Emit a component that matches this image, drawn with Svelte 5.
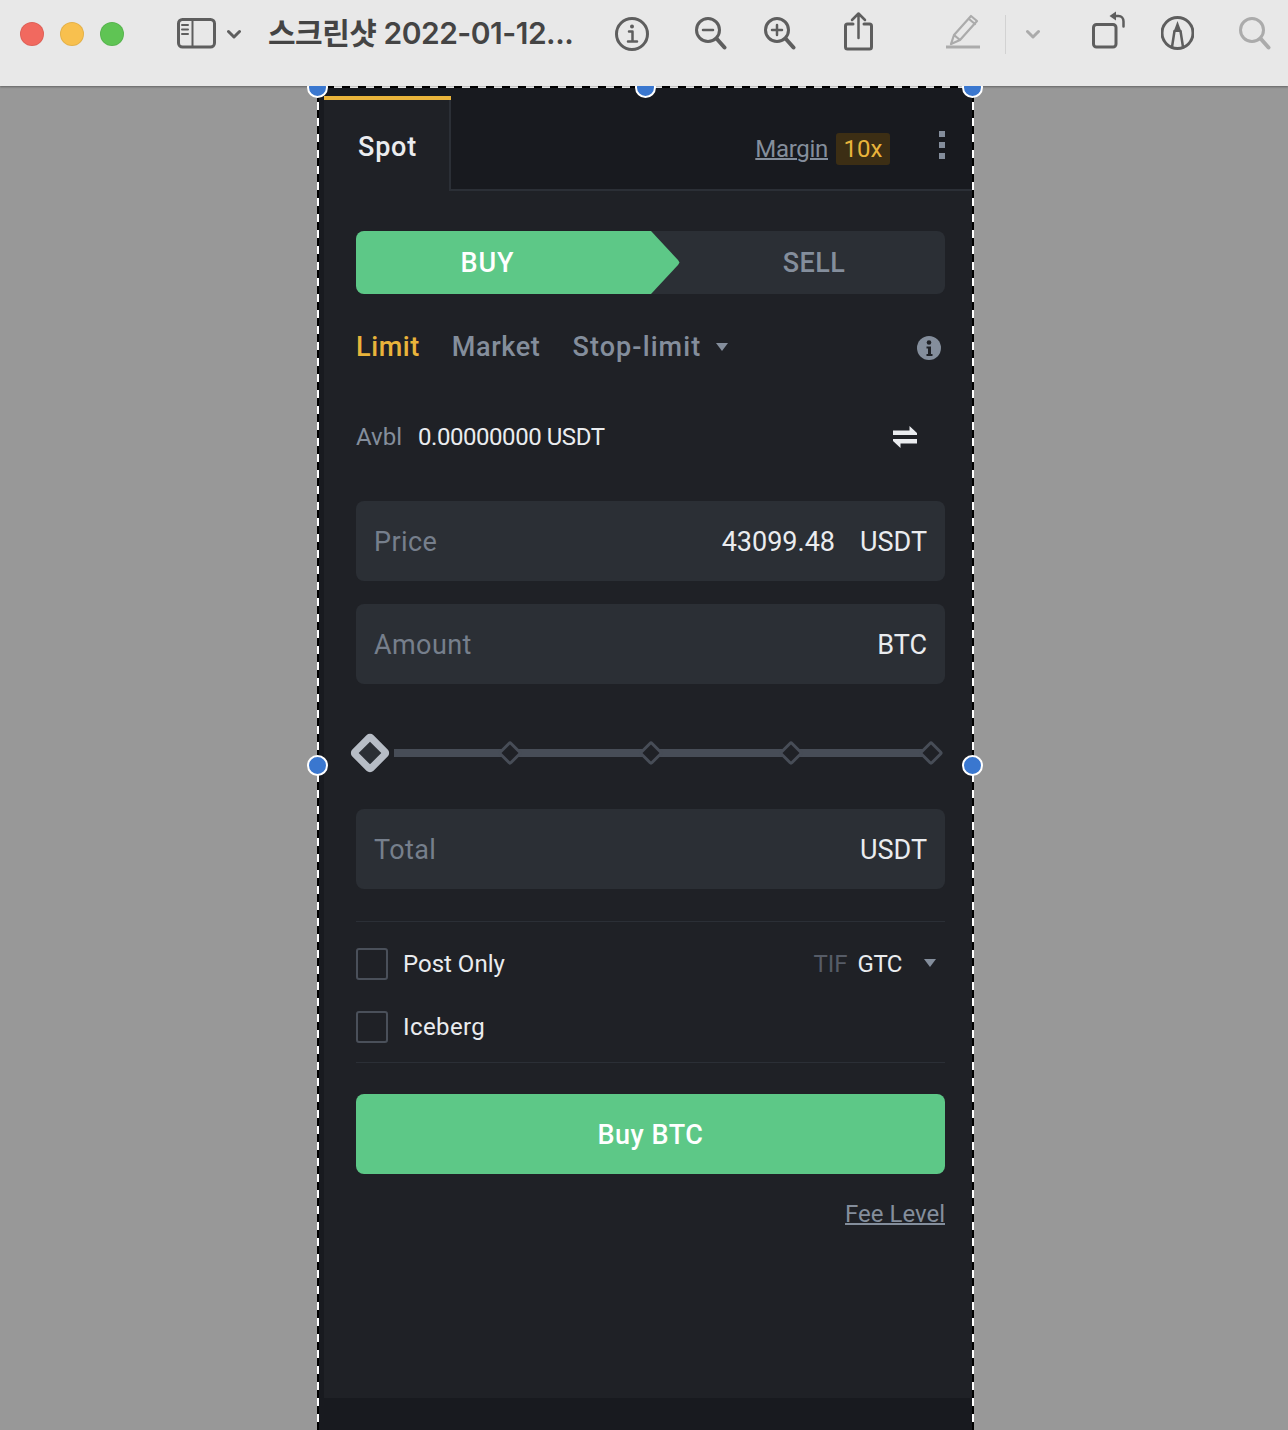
<script>
	const stops = [1, 2, 3, 4];
</script>

<header class="toolbar">
	<span class="light red"></span>
	<span class="light yellow"></span>
	<span class="light green"></span>

	<svg class="ic ml-sidebar" width="39" height="48" viewBox="0 0 39 48">
		<rect x="1.5" y="9.5" width="36" height="27.5" rx="4" />
		<path d="M15.5 9.5V37M5 15h6M5 19.5h6M5 24h6" stroke-width="2" />
	</svg>
	<svg class="ic ml-chev" width="14" height="48" viewBox="0 0 14 48">
		<path d="M1.5 21.5l5.5 5.5 5.5-5.5" />
	</svg>
	<div class="title">스크린샷 2022-01-12...</div>
	<svg class="ic ml-info" width="34" height="48" viewBox="0 0 34 48">
		<circle cx="17" cy="24" r="15.5" />
		<path d="M14 21.5h3.5V31M13 31.5h9" stroke-width="2.5" />
		<circle class="dot" cx="17" cy="16.5" r="2" />
	</svg>
	<svg class="ic ml-zoomout" width="32" height="48" viewBox="0 0 32 48">
		<circle cx="13" cy="20" r="11.5" />
		<path d="M8 20h10" stroke-width="2.5" />
		<path d="M21.5 28.5l8 9" stroke-width="4" />
	</svg>
	<svg class="ic ml-zoomin" width="32" height="48" viewBox="0 0 32 48">
		<circle cx="13" cy="20" r="11.5" />
		<path d="M8 20h10M13 15v10" stroke-width="2.5" />
		<path d="M21.5 28.5l8 9" stroke-width="4" />
	</svg>
	<svg class="ic ml-share" width="29" height="48" viewBox="0 0 29 48">
		<path d="M9 14H3.5a2 2 0 0 0-2 2v21a2 2 0 0 0 2 2h22a2 2 0 0 0 2-2V16a2 2 0 0 0-2-2H20" />
		<path d="M14.5 28V4M8 10l6.5-6.5L21 10" stroke-width="2.5" />
	</svg>
	<svg class="ic muted ml-pen" width="34" height="48" viewBox="0 0 34 48">
		<path d="M5 34l3-9 17-19 6 5-17 19zM8 25l6 5M23 9l6 5" stroke-width="2.2" />
		<path d="M0 37h34" stroke-width="2.8" />
	</svg>
	<div class="sep"></div>
	<svg class="ic muted ml-chev2" width="14" height="48" viewBox="0 0 14 48">
		<path d="M1.5 21.5l5.5 5.5 5.5-5.5" />
	</svg>
	<svg class="ic ml-rotate" width="33" height="48" viewBox="0 0 33 48">
		<rect x="1.5" y="14.5" width="22.5" height="22.5" rx="3" />
		<path d="M31.500 16.500v-5c0-3-2-5.500-5-5.500h-4" stroke-width="2.500" />
		<path class="dot" d="M17.500 6l6.500-4.500v9z" />
	</svg>
	<svg class="ic ml-markup" width="33" height="48" viewBox="0 0 33 48">
		<circle cx="16.500" cy="23" r="15.500" />
		<path d="M13.500 21l-2.500 16M19.500 21l2.500 16" stroke-width="2.500" />
		<path class="dot" d="M16.500 11l4 11h-8z" />
	</svg>
	<svg class="ic muted ml-search" width="32" height="48" viewBox="0 0 32 48">
		<circle cx="13" cy="20" r="11.500" />
		<path d="M21.500 28.500l8 9" stroke-width="4" />
	</svg>
</header>

<main class="stage">
	<section class="selection">
		<span class="dash-top"></span>
		<span class="handle h-tl"></span>
		<span class="handle h-tm"></span>
		<span class="handle h-tr"></span>
		<span class="handle h-ml"></span>
		<span class="handle h-mr"></span>

		<div class="panel">
			<div class="tabs">
				<div class="tab-spot">Spot</div>
				<div class="tab-rest">
					<a class="margin-link" href="#margin">Margin</a>
					<span class="badge">10x</span>
					<span class="dots"><i></i><i></i><i></i></span>
				</div>
			</div>

			<div class="body">
				<div class="side">
					<div class="buy">BUY</div>
					<div class="sell">SELL</div>
				</div>

				<div class="types">
					<span class="active">Limit</span>
					<span>Market</span>
					<span class="stop">Stop-limit</span>
					<span class="caret"></span>
					<svg class="info" width="24" height="24" viewBox="0 0 24 24">
						<circle cx="12" cy="12" r="12" fill="#848e9c" />
						<circle cx="12" cy="6.500" r="2.300" fill="#1f2126" />
						<path d="M9.500 10.500h4.500v7.500h1.500v2h-6v-2h1.500v-5.500h-1.500z" fill="#1f2126" />
					</svg>
				</div>

				<div class="avbl">
					<span class="avbl-label">Avbl</span>
					<span class="avbl-value">0.00000000 USDT</span>
					<svg class="swap" width="26" height="24" viewBox="0 0 26 24">
						<path d="M1 5.500h16.500V1L25 8v2H1zM25 14v4.500H8.500V23L1 16v-2z" fill="#eaecef" />
					</svg>
				</div>

				<div class="field">
					<span class="label">Price</span>
					<span class="value">43099.48</span>
					<span class="unit">USDT</span>
				</div>
				<div class="field second">
					<span class="label">Amount</span>
					<span class="unit">BTC</span>
				</div>

				<div class="slider">
					<span class="node thumb"></span>
					{#each stops as s (s)}
						<span class="node"></span>
					{/each}
				</div>

				<div class="field">
					<span class="label">Total</span>
					<span class="unit">USDT</span>
				</div>

				<div class="options">
					<div class="opt">
						<span class="check"></span>
						<span class="opt-name">Post Only</span>
						<span class="tif">TIF</span>
						<span class="gtc">GTC</span>
						<span class="caret light-caret"></span>
					</div>
					<div class="opt">
						<span class="check"></span>
						<span class="opt-name wide">Iceberg</span>
					</div>
				</div>

				<button class="submit">Buy BTC</button>
				<div class="fee"><a href="#fee">Fee Level</a></div>
			</div>
		</div>
	</section>
</main>

<style>
	:global(body) {
		background: #989898;
		font-family: Roboto, "Noto Sans CJK KR", sans-serif;
		overflow: hidden;
	}

	.toolbar {
		position: relative;
		z-index: 3;
		display: flex;
		align-items: center;
		box-sizing: border-box;
		height: 86px;
		padding: 0 0 18px 20px;
		background: #e8e8e8;
		box-shadow: 0 1px 2px rgba(0, 0, 0, 0.35);
	}

	.light {
		width: 24px;
		height: 24px;
		border-radius: 50%;
		margin-right: 16px;
		box-sizing: border-box;
		border: 1px solid rgba(0, 0, 0, 0.08);
	}
	.red { background: #f1695f; }
	.yellow { background: #f8c04e; }
	.green { background: #5fc454; margin-right: 0; }

	.ic {
		flex: none;
		fill: none;
		stroke: #5e5e5e;
		stroke-width: 3;
		stroke-linecap: round;
		stroke-linejoin: round;
	}
	.ic.muted { stroke: #ababab; }
	.ic .dot { fill: #5e5e5e; stroke: none; }

	.ml-sidebar { margin-left: 53px; }
	.ml-chev { margin-left: 11px; }
	.ml-info { margin-left: 40px; }
	.ml-zoomout { margin-left: 46px; }
	.ml-zoomin { margin-left: 37px; }
	.ml-share { margin-left: 48px; }
	.ml-pen { margin-left: 73px; }
	.ml-chev2 { margin-left: 20px; }
	.ml-rotate { margin-left: 52px; }
	.ml-markup { margin-left: 36px; }
	.ml-search { margin-left: 45px; }

	.title {
		flex: none;
		width: 307px;
		margin-left: 27px;
		margin-bottom: 6px;
		font-family: Inter, "Noto Sans CJK KR", sans-serif;
		font-size: 30px;
		font-weight: 600;
		letter-spacing: -0.5px;
		color: #444;
		white-space: nowrap;
	}

	.sep {
		flex: none;
		width: 1px;
		height: 39px;
		margin-left: 25px;
		background: #d2d2d2;
	}

	.stage {
		height: 1344px;
		padding-left: 318px;
		overflow: hidden;
	}

	.selection {
		position: relative;
		box-sizing: border-box;
		width: 655px;
		height: 1344px;
		background: #181a1f;
		padding-left: 6px;
	}
	.selection::before,
	.selection::after {
		content: "";
		position: absolute;
		top: 0;
		bottom: 0;
		width: 2px;
		z-index: 2;
		background: repeating-linear-gradient(#fff 0 8px, #000 8px 16px);
	}
	.selection::before { left: -1px; }
	.selection::after { right: -1px; }

	.dash-top {
		position: absolute;
		left: 0;
		right: 0;
		top: 0;
		height: 2px;
		z-index: 2;
		background: repeating-linear-gradient(90deg, #fff 0 8px, #000 8px 16px);
	}

	.handle {
		position: absolute;
		z-index: 3;
		box-sizing: border-box;
		width: 21px;
		height: 21px;
		margin: -10.500px 0 0 -10.500px;
		border-radius: 50%;
		background: #3a77cf;
		border: 2px solid #fff;
	}
	.h-tl { left: -0.500px; top: 1px; }
	.h-tm { left: 327px; top: 1px; }
	.h-tr { left: 654.500px; top: 1px; }
	.h-ml { left: -0.500px; top: 679px; }
	.h-mr { left: 654.500px; top: 679px; }

	.panel {
		background: #1f2126;
		height: 1312px;
		color: #eaecef;
	}

	.tabs {
		display: flex;
		height: 105px;
		background: #181a1f;
	}
	.tab-spot {
		box-sizing: border-box;
		width: 127px;
		margin-top: 14px;
		padding: 18px 0 0 34px;
		background: #1f2126;
		border-right: 2px solid #2b2f36;
		font-size: 27px;
		font-weight: 500;
		letter-spacing: 0.8px;
		line-height: 58px;
		position: relative;
	}
	.tab-spot::before {
		content: "";
		position: absolute;
		left: 0;
		right: -2px;
		top: -4px;
		height: 4px;
		background: #e9b43b;
	}
	.tab-rest {
		flex: 1;
		display: flex;
		align-items: center;
		justify-content: flex-end;
		box-sizing: border-box;
		padding: 22px 28px 0 0;
		background: #181a1f;
		border-bottom: 2px solid #2b2f36;
	}
	.margin-link {
		color: #848e9c;
		font-size: 24px;
		letter-spacing: -0.3px;
		text-decoration-thickness: 2px;
	}
	.badge {
		margin-left: 8px;
		width: 54px;
		text-align: center;
		height: 32px;
		line-height: 32px;
		border-radius: 3px;
		background: #3c2e14;
		color: #e9b43b;
		font-size: 24px;
	}
	.dots {
		display: flex;
		flex-direction: column;
		gap: 5px;
		margin-left: 49px;
		margin-bottom: 8px;
	}
	.dots i {
		display: block;
		width: 6px;
		height: 6px;
		background: #848e9c;
	}

	.body {
		padding: 40px 28px 0 32px;
	}

	.side {
		display: flex;
		height: 63px;
		border-radius: 8px;
		background: #2b2f35;
		overflow: hidden;
		font-size: 27px;
		font-weight: 500;
		line-height: 65px;
		text-align: center;
	}
	.buy {
		width: 324px;
		padding-right: 61px;
		box-sizing: border-box;
		background: #5dc887;
		color: #fff;
		letter-spacing: 1px;
		clip-path: polygon(0 0, 295px 0, 322px 29px, 323.500px 31.500px, 322px 34px, 295px 63px, 0 63px);
	}
	.sell {
		flex: 1;
		color: #848e9c;
		padding-left: 3px;
		letter-spacing: 0.4px;
	}

	.types {
		display: flex;
		align-items: center;
		height: 48px;
		margin-top: 29px;
		color: #848e9c;
		font-size: 27px;
		font-weight: 500;
		letter-spacing: 0.6px;
	}
	.types span { margin-right: 32px; }
	.types .active { color: #e9b43b; }
	.types .stop {
		margin-right: 15px;
		letter-spacing: 1.1px;
	}
	.types .caret { margin-right: 0; }

	.caret {
		width: 0;
		height: 0;
		border-left: 6px solid transparent;
		border-right: 6px solid transparent;
		border-top: 8px solid #848e9c;
	}
	.info {
		margin-left: auto;
		margin-right: 4px;
		transform: translateY(1px);
	}

	.avbl {
		display: flex;
		align-items: center;
		margin-top: 42px;
		height: 48px;
		font-size: 24px;
	}
	.avbl-label { color: #848e9c; }
	.avbl-value {
		margin-left: 16px;
		letter-spacing: -0.45px;
	}
	.swap {
		margin-left: auto;
		margin-right: 27px;
	}

	.field {
		display: flex;
		align-items: center;
		box-sizing: border-box;
		height: 79.500px;
		padding: 2px 18px 0;
		border-radius: 8px;
		background: #2b2f35;
		font-size: 27px;
	}
	.avbl + .field { margin-top: 40px; }
	.field.second { margin-top: 23.500px; }
	.label {
		margin-right: auto;
		color: #767f8c;
		letter-spacing: 0.4px;
	}
	.unit { margin-left: 25px; }

	.slider {
		display: flex;
		justify-content: space-between;
		align-items: center;
		height: 28px;
		margin: 55.500px 0 42px;
		background: linear-gradient(#474d57, #474d57) no-repeat 38px center / 536px 8px;
	}
	.node {
		flex: none;
		box-sizing: border-box;
		width: 18px;
		height: 18px;
		margin: 0 5px;
		border: 3px solid #474d57;
		border-radius: 3px;
		background: #1f2126;
		transform: rotate(45deg);
	}
	.node.thumb {
		width: 30px;
		height: 30px;
		margin: -1px;
		border: 7px solid #b7bdc6;
		border-radius: 5px;
		background: #2b2f35;
	}

	.options {
		margin-top: 32px;
		border-top: 1px solid #2b2f36;
		border-bottom: 1px solid #2b2f36;
		padding: 26.500px 0 19px;
	}
	.opt {
		display: flex;
		align-items: center;
		height: 32px;
		font-size: 24px;
	}
	.opt + .opt { margin-top: 31px; }
	.opt-name.wide { letter-spacing: 0.4px; }
	.check {
		box-sizing: border-box;
		width: 32px;
		height: 32px;
		margin-right: 15px;
		border: 2px solid #4a505a;
		border-radius: 3px;
	}
	.tif {
		margin-left: auto;
		color: #565c67;
	}
	.gtc {
		margin-left: 10px;
		letter-spacing: -0.5px;
	}
	.light-caret {
		margin: 0 9px 0 22px;
		transform: translateY(-1px);
	}

	.submit {
		display: block;
		width: 100%;
		height: 80px;
		margin-top: 31px;
		padding: 2px 0 0;
		border: 0;
		border-radius: 8px;
		background: #5dc887;
		color: #fff;
		font-family: inherit;
		font-size: 27px;
		font-weight: 500;
		letter-spacing: 0.5px;
	}

	.fee {
		margin-top: 26px;
		text-align: right;
		font-size: 24px;
	}
	.fee a {
		color: #848e9c;
		text-decoration-thickness: 2px;
	}
</style>
